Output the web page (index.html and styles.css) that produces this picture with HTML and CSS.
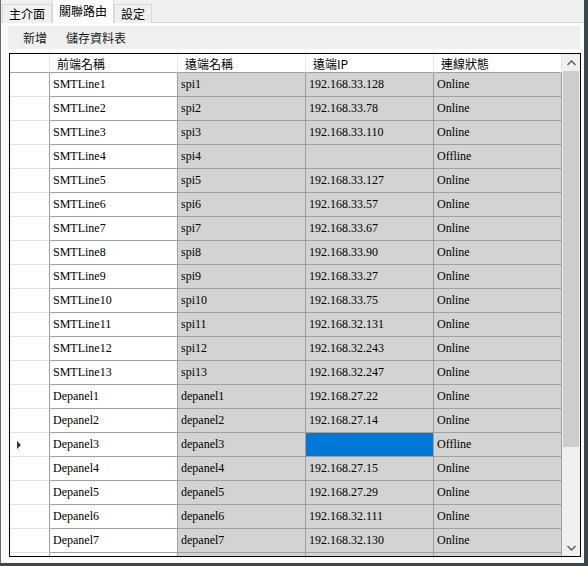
FILE: index.html
```html
<!DOCTYPE html>
<html>
<head>
<meta charset="utf-8">
<link rel="stylesheet" href="styles.css">
</head>
<body>
<div class="window">
  <div class="tabstrip">
    <div class="tab">主介面</div>
    <div class="tab active">關聯路由</div>
    <div class="tab">設定</div>
  </div>
  <div class="page">
    <div class="toolbar">
      <span class="tool">新增</span>
      <span class="tool">儲存資料表</span>
    </div>
    <div class="grid">
      <div class="rows">
        <div class="row head">
          <div class="c rh"></div>
          <div class="c">前端名稱</div>
          <div class="c">遠端名稱</div>
          <div class="c">遠端IP</div>
          <div class="c">連線狀態</div>
        </div>
        <div class="row"><div class="c rh"></div><div class="c w">SMTLine1</div><div class="c">spi1</div><div class="c">192.168.33.128</div><div class="c">Online</div></div>
        <div class="row"><div class="c rh"></div><div class="c w">SMTLine2</div><div class="c">spi2</div><div class="c">192.168.33.78</div><div class="c">Online</div></div>
        <div class="row"><div class="c rh"></div><div class="c w">SMTLine3</div><div class="c">spi3</div><div class="c">192.168.33.110</div><div class="c">Online</div></div>
        <div class="row"><div class="c rh"></div><div class="c w">SMTLine4</div><div class="c">spi4</div><div class="c"></div><div class="c">Offline</div></div>
        <div class="row"><div class="c rh"></div><div class="c w">SMTLine5</div><div class="c">spi5</div><div class="c">192.168.33.127</div><div class="c">Online</div></div>
        <div class="row"><div class="c rh"></div><div class="c w">SMTLine6</div><div class="c">spi6</div><div class="c">192.168.33.57</div><div class="c">Online</div></div>
        <div class="row"><div class="c rh"></div><div class="c w">SMTLine7</div><div class="c">spi7</div><div class="c">192.168.33.67</div><div class="c">Online</div></div>
        <div class="row"><div class="c rh"></div><div class="c w">SMTLine8</div><div class="c">spi8</div><div class="c">192.168.33.90</div><div class="c">Online</div></div>
        <div class="row"><div class="c rh"></div><div class="c w">SMTLine9</div><div class="c">spi9</div><div class="c">192.168.33.27</div><div class="c">Online</div></div>
        <div class="row"><div class="c rh"></div><div class="c w">SMTLine10</div><div class="c">spi10</div><div class="c">192.168.33.75</div><div class="c">Online</div></div>
        <div class="row"><div class="c rh"></div><div class="c w">SMTLine11</div><div class="c">spi11</div><div class="c">192.168.32.131</div><div class="c">Online</div></div>
        <div class="row"><div class="c rh"></div><div class="c w">SMTLine12</div><div class="c">spi12</div><div class="c">192.168.32.243</div><div class="c">Online</div></div>
        <div class="row"><div class="c rh"></div><div class="c w">SMTLine13</div><div class="c">spi13</div><div class="c">192.168.32.247</div><div class="c">Online</div></div>
        <div class="row"><div class="c rh"></div><div class="c w">Depanel1</div><div class="c">depanel1</div><div class="c">192.168.27.22</div><div class="c">Online</div></div>
        <div class="row"><div class="c rh"></div><div class="c w">Depanel2</div><div class="c">depanel2</div><div class="c">192.168.27.14</div><div class="c">Online</div></div>
        <div class="row"><div class="c rh"><span class="cur"></span></div><div class="c w">Depanel3</div><div class="c">depanel3</div><div class="c sel"></div><div class="c">Offline</div></div>
        <div class="row"><div class="c rh"></div><div class="c w">Depanel4</div><div class="c">depanel4</div><div class="c">192.168.27.15</div><div class="c">Online</div></div>
        <div class="row"><div class="c rh"></div><div class="c w">Depanel5</div><div class="c">depanel5</div><div class="c">192.168.27.29</div><div class="c">Online</div></div>
        <div class="row"><div class="c rh"></div><div class="c w">Depanel6</div><div class="c">depanel6</div><div class="c">192.168.32.111</div><div class="c">Online</div></div>
        <div class="row"><div class="c rh"></div><div class="c w">Depanel7</div><div class="c">depanel7</div><div class="c">192.168.32.130</div><div class="c">Online</div></div>
        <div class="row"><div class="c rh"></div><div class="c w"></div><div class="c"></div><div class="c"></div><div class="c"></div></div>
      </div>
      <div class="vscroll">
        <div class="arrow">
          <svg width="9" height="6" viewBox="0 0 9 6"><path d="M0.5 5 L4.5 1 L8.5 5" fill="none" stroke="#606060" stroke-width="1.5"/></svg>
        </div>
        <div class="track">
          <div class="thumb"></div>
        </div>
        <div class="arrow">
          <svg width="9" height="6" viewBox="0 0 9 6"><path d="M0.5 1 L4.5 5 L8.5 1" fill="none" stroke="#606060" stroke-width="1.5"/></svg>
        </div>
      </div>
    </div>
  </div>
</div>
</body>
</html>
```

FILE: styles.css
```css
* { box-sizing: border-box; }
html, body {
  margin: 0;
  padding: 0;
  width: 588px;
  height: 566px;
  overflow: hidden;
  background: #3a474c;
}
.window {
  width: 584px;
  height: 563px;
  background: #f0f0f0;
  border-left: 1px solid #6a6a6a;
  display: flex;
  flex-direction: column;
  font-family: "Noto Sans CJK TC", "Noto Sans", sans-serif;
}
.tabstrip {
  height: 23px;
  display: flex;
  align-items: flex-end;
  padding-left: 1px;
  border-bottom: 1px solid #d9d9d9;
  background: #f0f0f0;
}
.tab {
  height: 19px;
  padding: 0 6px;
  font-size: 12px;
  line-height: 18px;
  color: #000;
  border: 1px solid #d9d9d9;
  border-bottom: none;
  background: #f0f0f0;
  margin-bottom: -1px;
}
.tab.active {
  height: 24px;
  background: #ffffff;
  line-height: 22px;
  padding: 0 6px;
  border-color: #d9d9d9;
  position: relative;
  z-index: 1;
}
.page {
  flex: 1;
  background: #fbfbfb;
  padding: 3px 0 0 7px;
  display: flex;
  flex-direction: column;
}
.toolbar {
  height: 23px;
  background: #efefef;
  display: flex;
  align-items: center;
  gap: 19px;
  padding-left: 15px;
  margin-right: 4px;
  margin-bottom: 4px;
}
.tool {
  font-size: 12px;
  color: #1a1a1a;
}
.grid {
  width: 572px;
  height: 504px;
  margin-left: 1px;
  border: 1px solid #000;
  background: #ababab;
  display: flex;
  overflow: hidden;
}
.rows {
  width: 552px;
  overflow: hidden;
  background: #fff;
}
.row {
  display: grid;
  grid-template-columns: 40px 128px 128px 128px 128px;
  height: 24px;
}
.row.head {
  height: 19px;
}
.c {
  border-right: 1px solid #a0a0a0;
  border-bottom: 1px solid #a0a0a0;
  background: #d3d3d3;
  font-family: "Liberation Serif", "Noto Sans CJK TC", serif;
  font-size: 12px;
  line-height: 23px;
  padding-left: 3px;
  color: #000;
  white-space: nowrap;
  overflow: hidden;
}
.c.w { background: #fff; }
.c.rh {
  background: #fff;
  border-bottom-color: #e3e3e3;
  border-right-color: #a0a0a0;
  display: flex;
  align-items: center;
  padding-left: 7px;
}
.c.sel { background: #0078d7; }
.head .c {
  background: #fff;
  font-family: "Noto Sans CJK TC", "Noto Sans", sans-serif;
  font-size: 12px;
  line-height: 19px;
  padding-left: 7px;
  border-right-color: #e5e5e5;
  border-bottom-color: #a0a0a0;
}
.head .c.rh { border-right-color: #e5e5e5; }
.cur {
  width: 0;
  height: 0;
  border-top: 4px solid transparent;
  border-bottom: 4px solid transparent;
  border-left: 4px solid #333;
}
.vscroll {
  width: 18px;
  background: #f0f0f0;
  display: flex;
  flex-direction: column;
}
.arrow {
  height: 17px;
  display: flex;
  align-items: center;
  justify-content: center;
}
.track {
  flex: 1;
  padding: 0 1px;
}
.thumb {
  height: 376px;
  background: #cdcdcd;
}
```
